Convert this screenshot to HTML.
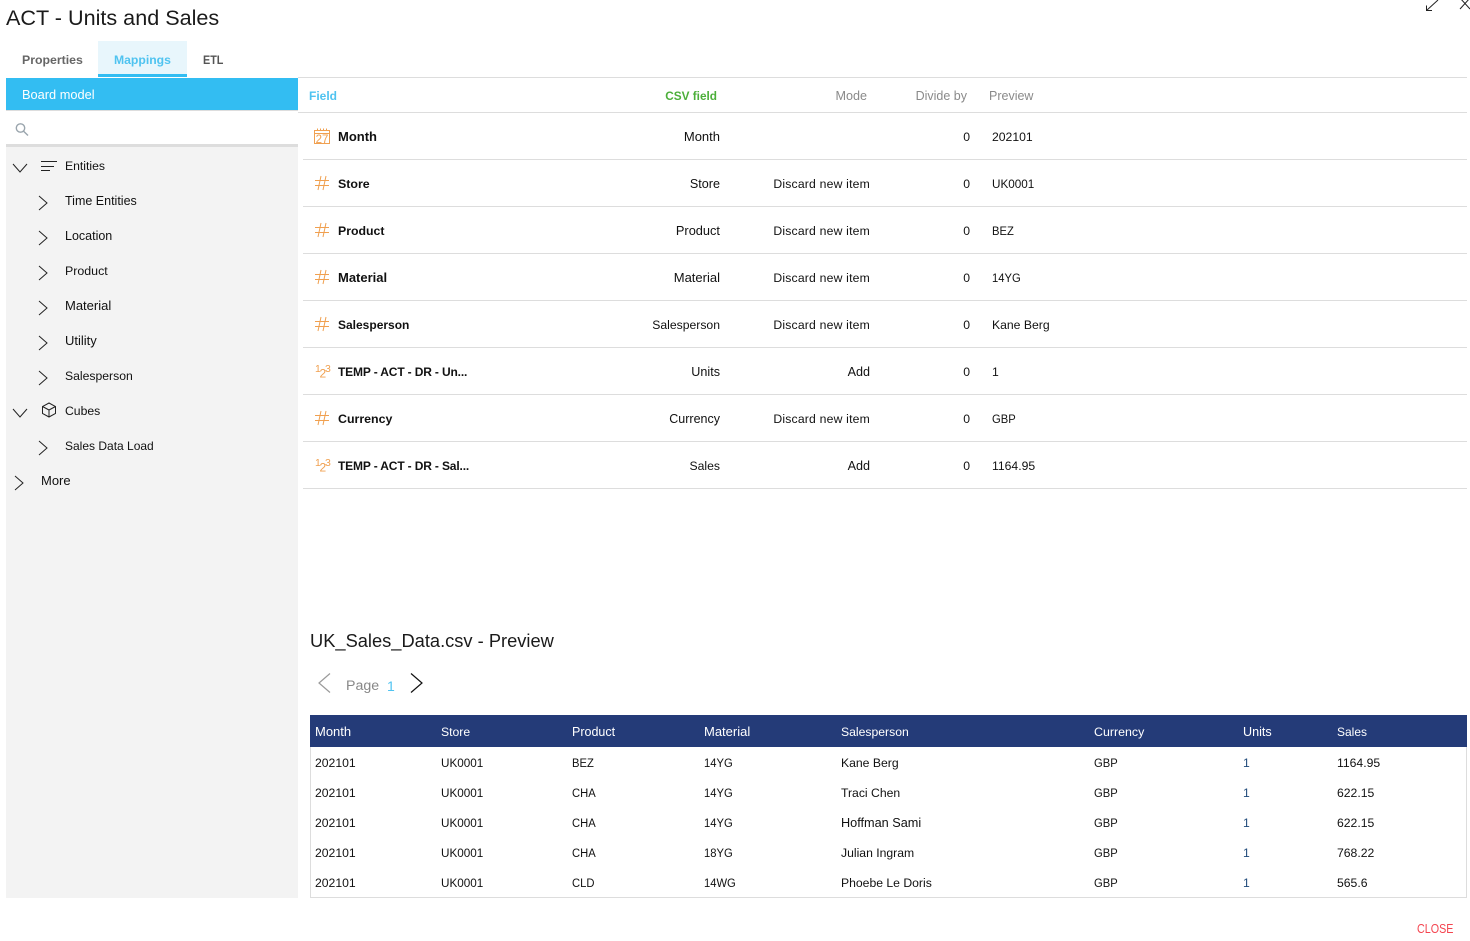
<!DOCTYPE html>
<html><head><meta charset="utf-8"><style>
html,body{margin:0;padding:0;background:#fff;}
body{width:1470px;height:941px;position:relative;overflow:hidden;font-family:"Liberation Sans",sans-serif;font-size:12.2px;color:#111;}
.a,.r{position:absolute;white-space:nowrap;line-height:18px;}
.r{text-align:right;}
.box{position:absolute;}
.bold{font-weight:bold;font-size:12px;}
.ic{position:absolute;overflow:visible;}
.d{letter-spacing:.2px;}
.t{letter-spacing:-.15px;}
.m{font-size:13px;}
.c{transform:scaleX(.92);transform-origin:left center;}
.u{transform:scaleX(.96);transform-origin:left center;}
.ic text{font-family:"Liberation Sans",sans-serif;fill:#f0a050;}
</style></head><body>
<div class="a" style="left:6px;top:5px;font-size:21.600px;line-height:26px;color:#1a1a1a;">ACT - Units and Sales</div>
<svg class="ic" style="left:1424px;top:0" width="46" height="14" fill="none" stroke="#222" stroke-width="1"><path d="M2.500 10.500 L14 0 M2.500 5.500 V10.500 H8"/><path d="M36 -2 L46 9 M46 -2 L36 9"/></svg>

<div class="box" style="left:98px;top:41px;width:89px;height:33px;background:#e8f6fc;"></div>
<div class="box" style="left:98px;top:74px;width:89px;height:3px;background:#33bdf2;"></div>
<div class="a bold" style="left:22px;top:51px;color:#666;font-size:12.300px;">Properties</div>
<div class="a bold" style="left:114px;top:51px;color:#4fc3f0;font-size:12.200px;">Mappings</div>
<div class="a bold" style="left:203px;top:51px;color:#555;font-size:12px;transform:scaleX(.9);transform-origin:left center;">ETL</div>
<div class="box" style="left:298px;top:77px;width:1169px;height:1px;background:#ddd;"></div>

<div class="box" style="left:6px;top:78px;width:292px;height:32px;background:#33bdf2;"></div>
<div class="a" style="left:22px;top:86px;color:#fff;font-size:12.800px;">Board model</div>
<div class="box" style="left:6px;top:110px;width:292px;height:1px;background:#ddd;"></div>
<svg class="ic" style="left:15px;top:123px" width="14" height="14" fill="none" stroke="#9aa5ad" stroke-width="1.400"><circle cx="5.500" cy="5" r="4.200"/><path d="M8.600 8.200 L13 12.500"/></svg>
<div class="box" style="left:6px;top:144px;width:292px;height:754px;background:#f3f3f3;border-top:3px solid #ddd;box-sizing:border-box;"></div>

<svg class="ic" style="left:0;top:150px" width="60" height="350" fill="none" stroke="#222" stroke-width="1">
<path d="M13 14 L20 22 L27 14"/>
<path d="M41 11.500 H57 M41 16.500 H54 M41 20.500 H50"/>
<path d="M39 46 L47 53 L39 60"/>
<path d="M39 81 L47 88 L39 95"/>
<path d="M39 116 L47 123 L39 130"/>
<path d="M39 151 L47 158 L39 165"/>
<path d="M39 186 L47 193 L39 200"/>
<path d="M39 221 L47 228 L39 235"/>
<path d="M13 259 L20 267 L27 259"/>
<path d="M49 253 L55.500 256.500 V263.500 L49 267 L42.500 263.500 V256.500 Z M42.500 256.500 L49 260 L55.500 256.500 M49 260 V267"/>
<path d="M39 291 L47 298 L39 305"/>
<path d="M15 326 L23 333 L15 340"/>
</svg>
<div class="a" style="left:65px;top:157px;">Entities</div>
<div class="a" style="left:65px;top:192px;font-size:12.500px;">Time Entities</div>
<div class="a" style="left:65px;top:227px;font-size:12.500px;">Location</div>
<div class="a" style="left:65px;top:262px;font-size:12.400px;">Product</div>
<div class="a m" style="left:65px;top:297px;">Material</div>
<div class="a m" style="left:65px;top:332px;">Utility</div>
<div class="a" style="left:65px;top:367px;">Salesperson</div>
<div class="a" style="left:65px;top:402px;">Cubes</div>
<div class="a" style="left:65px;top:437px;font-size:12px;">Sales Data Load</div>
<div class="a m" style="left:41px;top:472px;">More</div>

<div class="a bold" style="left:309px;top:87px;color:#4fc3f0;">Field</div>
<div class="r bold" style="left:617px;width:100px;top:87px;color:#4caf3a;font-size:11.800px;">CSV field</div>
<div class="r" style="left:767px;width:100px;top:87px;color:#8a8a8a;font-size:12.600px;">Mode</div>
<div class="r" style="left:867px;width:100px;top:87px;color:#8a8a8a;font-size:12.500px;">Divide by</div>
<div class="a" style="left:989px;top:87px;color:#8a8a8a;font-size:12.500px;">Preview</div>
<div class="box" style="left:298px;top:112px;width:1169px;height:1px;background:#ddd;"></div>
<div class="box" style="left:303px;top:159px;width:1164px;height:1px;background:#ddd;"></div>
<div class="box" style="left:303px;top:206px;width:1164px;height:1px;background:#ddd;"></div>
<div class="box" style="left:303px;top:253px;width:1164px;height:1px;background:#ddd;"></div>
<div class="box" style="left:303px;top:300px;width:1164px;height:1px;background:#ddd;"></div>
<div class="box" style="left:303px;top:347px;width:1164px;height:1px;background:#ddd;"></div>
<div class="box" style="left:303px;top:394px;width:1164px;height:1px;background:#ddd;"></div>
<div class="box" style="left:303px;top:441px;width:1164px;height:1px;background:#ddd;"></div>
<div class="box" style="left:303px;top:488px;width:1164px;height:1px;background:#ddd;"></div>

<svg class="ic" style="left:314px;top:128px" width="16" height="16" fill="none" stroke="#f0a050" stroke-width="1"><path d="M.5 2.500 H15.500 V15.500 H.5 Z M.5 5.500 H15.500 M3.500 .5 V2.500 M6.500 .5 V2.500 M9.500 .5 V2.500 M12.500 .5 V2.500"/><text x="8" y="14.800" font-size="11.500" text-anchor="middle" stroke="none">27</text></svg>
<svg class="ic" style="left:315px;top:176px" width="14" height="14" fill="none" stroke="#f0a050" stroke-width="1"><path d="M0 4.500 H14 M0 9.500 H14 M6 0 L3 14 M11 0 L8 14"/></svg>
<svg class="ic" style="left:315px;top:223px" width="14" height="14" fill="none" stroke="#f0a050" stroke-width="1"><path d="M0 4.500 H14 M0 9.500 H14 M6 0 L3 14 M11 0 L8 14"/></svg>
<svg class="ic" style="left:315px;top:270px" width="14" height="14" fill="none" stroke="#f0a050" stroke-width="1"><path d="M0 4.500 H14 M0 9.500 H14 M6 0 L3 14 M11 0 L8 14"/></svg>
<svg class="ic" style="left:315px;top:317px" width="14" height="14" fill="none" stroke="#f0a050" stroke-width="1"><path d="M0 4.500 H14 M0 9.500 H14 M6 0 L3 14 M11 0 L8 14"/></svg>
<svg class="ic" style="left:315px;top:411px" width="14" height="14" fill="none" stroke="#f0a050" stroke-width="1"><path d="M0 4.500 H14 M0 9.500 H14 M6 0 L3 14 M11 0 L8 14"/></svg>
<svg class="ic" style="left:315px;top:364px" width="15" height="15"><text x="0" y="8" font-size="10.500">1</text><text x="4.500" y="13.500" font-size="12">2</text><text x="10" y="8" font-size="10.500">3</text></svg>
<svg class="ic" style="left:315px;top:458px" width="15" height="15"><text x="0" y="8" font-size="10.500">1</text><text x="4.500" y="13.500" font-size="12">2</text><text x="10" y="8" font-size="10.500">3</text></svg>

<div class="a bold" style="left:338px;top:128px;font-size:13px;">Month</div>
<div class="a bold" style="left:338px;top:175px;font-size:12.400px;">Store</div>
<div class="a bold" style="left:338px;top:222px;font-size:12.300px;">Product</div>
<div class="a bold" style="left:338px;top:269px;font-size:13px;">Material</div>
<div class="a bold" style="left:338px;top:316px;">Salesperson</div>
<div class="a bold t" style="left:338px;top:363px;">TEMP - ACT - DR - Un...</div>
<div class="a bold" style="left:338px;top:410px;font-size:12.400px;">Currency</div>
<div class="a bold t" style="left:338px;top:457px;">TEMP - ACT - DR - Sal...</div>

<div class="r m" style="left:600px;width:120px;top:128px;">Month</div>
<div class="r" style="left:600px;width:120px;top:175px;font-size:12.600px;">Store</div>
<div class="r" style="left:600px;width:120px;top:222px;font-size:12.800px;">Product</div>
<div class="r m" style="left:600px;width:120px;top:269px;">Material</div>
<div class="r" style="left:600px;width:120px;top:316px;">Salesperson</div>
<div class="r" style="left:600px;width:120px;top:363px;font-size:12.600px;">Units</div>
<div class="r" style="left:600px;width:120px;top:410px;font-size:12.500px;">Currency</div>
<div class="r" style="left:600px;width:120px;top:457px;">Sales</div>

<div class="r d" style="left:740px;width:130px;top:175px;">Discard new item</div>
<div class="r d" style="left:740px;width:130px;top:222px;">Discard new item</div>
<div class="r d" style="left:740px;width:130px;top:269px;">Discard new item</div>
<div class="r d" style="left:740px;width:130px;top:316px;">Discard new item</div>
<div class="r" style="left:740px;width:130px;top:363px;font-size:12.600px;">Add</div>
<div class="r d" style="left:740px;width:130px;top:410px;">Discard new item</div>
<div class="r" style="left:740px;width:130px;top:457px;font-size:12.600px;">Add</div>

<div class="r" style="left:930px;width:40px;top:128px;">0</div>
<div class="r" style="left:930px;width:40px;top:175px;">0</div>
<div class="r" style="left:930px;width:40px;top:222px;">0</div>
<div class="r" style="left:930px;width:40px;top:269px;">0</div>
<div class="r" style="left:930px;width:40px;top:316px;">0</div>
<div class="r" style="left:930px;width:40px;top:363px;">0</div>
<div class="r" style="left:930px;width:40px;top:410px;">0</div>
<div class="r" style="left:930px;width:40px;top:457px;">0</div>

<div class="a" style="left:992px;top:128px;">202101</div>
<div class="a u" style="left:992px;top:175px;">UK0001</div>
<div class="a c" style="left:992px;top:222px;">BEZ</div>
<div class="a c" style="left:992px;top:269px;">14YG</div>
<div class="a" style="left:992px;top:316px;">Kane Berg</div>
<div class="a" style="left:992px;top:363px;">1</div>
<div class="a c" style="left:992px;top:410px;">GBP</div>
<div class="a" style="left:992px;top:457px;">1164.95</div>

<div class="a" style="left:310px;top:629px;font-size:18.300px;line-height:24px;color:#1a1a1a;">UK_Sales_Data.csv - Preview</div>
<svg class="ic" style="left:316px;top:672px" width="110" height="22" fill="none" stroke-width="1.200"><path d="M14 1.500 L3 11 L14 20.500" stroke="#9a9a9a"/><path d="M95 1.500 L106 11 L95 20.500" stroke="#111"/></svg>
<div class="a" style="left:346px;top:677px;font-size:14.200px;color:#888;">Page</div>
<div class="a" style="left:387px;top:677px;font-size:14px;color:#4fc3f0;">1</div>

<div class="box" style="left:310px;top:715px;width:1157px;height:32px;background:#243b78;"></div>
<div class="box" style="left:310px;top:747px;width:1157px;height:151px;border:1px solid #ddd;border-top:0;box-sizing:border-box;"></div>
<div style="color:#fff;">
<div class="a m" style="left:315px;top:723px;">Month</div>
<div class="a" style="left:441px;top:723px;">Store</div>
<div class="a" style="left:572px;top:723px;font-size:12.500px;">Product</div>
<div class="a m" style="left:704px;top:723px;">Material</div>
<div class="a" style="left:841px;top:723px;">Salesperson</div>
<div class="a" style="left:1094px;top:723px;font-size:12.400px;">Currency</div>
<div class="a" style="left:1243px;top:723px;font-size:12.600px;">Units</div>
<div class="a" style="left:1337px;top:723px;font-size:12px;">Sales</div>
</div>
<div class="a" style="left:315px;top:754px;">202101</div><div class="a u" style="left:441px;top:754px;">UK0001</div><div class="a c" style="left:572px;top:754px;">BEZ</div><div class="a c" style="left:704px;top:754px;">14YG</div><div class="a" style="left:841px;top:754px;">Kane Berg</div><div class="a c" style="left:1094px;top:754px;">GBP</div><div class="a" style="left:1243px;top:754px;color:#1f4a7a;">1</div><div class="a" style="left:1337px;top:754px;">1164.95</div>
<div class="a" style="left:315px;top:784px;">202101</div><div class="a u" style="left:441px;top:784px;">UK0001</div><div class="a c" style="left:572px;top:784px;">CHA</div><div class="a c" style="left:704px;top:784px;">14YG</div><div class="a" style="left:841px;top:784px;">Traci Chen</div><div class="a c" style="left:1094px;top:784px;">GBP</div><div class="a" style="left:1243px;top:784px;color:#1f4a7a;">1</div><div class="a" style="left:1337px;top:784px;">622.15</div>
<div class="a" style="left:315px;top:814px;">202101</div><div class="a u" style="left:441px;top:814px;">UK0001</div><div class="a c" style="left:572px;top:814px;">CHA</div><div class="a c" style="left:704px;top:814px;">14YG</div><div class="a" style="left:841px;top:814px;font-size:12.700px;">Hoffman Sami</div><div class="a c" style="left:1094px;top:814px;">GBP</div><div class="a" style="left:1243px;top:814px;color:#1f4a7a;">1</div><div class="a" style="left:1337px;top:814px;">622.15</div>
<div class="a" style="left:315px;top:844px;">202101</div><div class="a u" style="left:441px;top:844px;">UK0001</div><div class="a c" style="left:572px;top:844px;">CHA</div><div class="a c" style="left:704px;top:844px;">18YG</div><div class="a" style="left:841px;top:844px;">Julian Ingram</div><div class="a c" style="left:1094px;top:844px;">GBP</div><div class="a" style="left:1243px;top:844px;color:#1f4a7a;">1</div><div class="a" style="left:1337px;top:844px;">768.22</div>
<div class="a" style="left:315px;top:874px;">202101</div><div class="a u" style="left:441px;top:874px;">UK0001</div><div class="a c" style="left:572px;top:874px;">CLD</div><div class="a c" style="left:704px;top:874px;">14WG</div><div class="a" style="left:841px;top:874px;">Phoebe Le Doris</div><div class="a c" style="left:1094px;top:874px;">GBP</div><div class="a" style="left:1243px;top:874px;color:#1f4a7a;">1</div><div class="a" style="left:1337px;top:874px;">565.6</div>
<div class="a" style="left:1417px;top:920px;color:#f4444f;font-size:12.500px;transform:scaleX(.86);transform-origin:left center;">CLOSE</div>
</body></html>
